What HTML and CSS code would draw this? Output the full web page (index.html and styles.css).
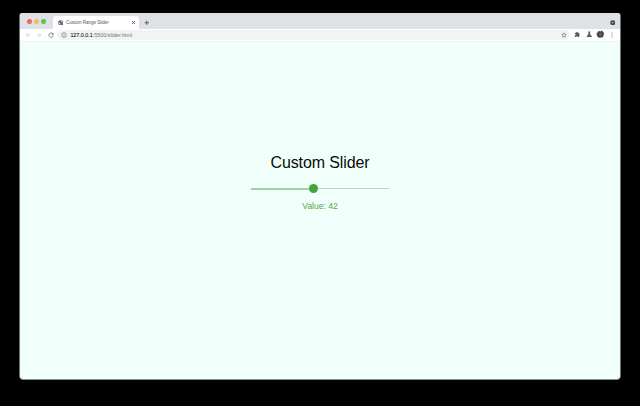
FILE: index.html
```html
<!DOCTYPE html>
<html lang="en">
<head>
<meta charset="utf-8">
<title>Custom Range Slider</title>
<link rel="stylesheet" href="styles.css">
</head>
<body>
<div class="window">
  <header class="tabstrip">
    <div class="lights"><i class="light red"></i><i class="light yellow"></i><i class="light green"></i></div>
    <div class="tab">
      <svg class="globe" viewBox="0 0 12 12"><circle cx="6" cy="6" r="5.6" fill="#505459"/><path d="M1.500 5 4 6.200 5.500 8v2.300C3 10 1.300 8 1.500 5ZM6 1.400 5.800 3.500 8 4.800l2.500.6C10.300 3 8.500 1.500 6 1.400ZM8 7.500h2.200L8.500 9.700Z" fill="#e8eaec"/></svg>
      <span class="tab-title">Custom Range Slider</span>
      <svg class="close" viewBox="0 0 10 10"><path d="m2 2 6 6M8 2 2 8" stroke="#45484c" stroke-width="1.6"/></svg>
    </div>
    <svg class="plus" viewBox="0 0 10 10"><path d="M5 1v8M1 5h8" stroke="#45484c" stroke-width="1.5"/></svg>
    <svg class="menu" viewBox="0 0 12 12"><circle cx="6" cy="6" r="5.500" fill="#484b50"/><path d="M3.500 4.800h5L6 7.800Z" fill="#e1e3e6"/></svg>
  </header>
  <nav class="toolbar">
    <svg class="nav-icon" viewBox="0 0 12 12"><path d="M10.500 6h-8M6 2.200 2.200 6 6 9.800" fill="none" stroke="#c2c4c7" stroke-width="1.300"/></svg>
    <svg class="nav-icon" viewBox="0 0 12 12"><path d="M1.500 6h8M6 2.200 9.800 6 6 9.800" fill="none" stroke="#c2c4c7" stroke-width="1.300"/></svg>
    <svg class="nav-icon" viewBox="0 0 12 12"><path d="M9.500 3.500A4.300 4.300 0 1 0 10.300 7" fill="none" stroke="#5f6368" stroke-width="1.500"/><path d="M10.800 1v4.300H6.500Z" fill="#5f6368"/></svg>
    <div class="address">
      <svg class="info" viewBox="0 0 12 12"><circle cx="6" cy="6" r="4.700" fill="none" stroke="#66696e" stroke-width="1.200"/><path d="M6 5.300V9M6 3v1.300" stroke="#66696e" stroke-width="1.300"/></svg>
      <span class="url"><span class="host">127.0.0.1</span>:5500/slider.html</span>
      <svg class="star" viewBox="0 0 12 12"><path d="m6 1.500 1.300 3.100 3.400.3-2.600 2.200.8 3.300L6 8.600l-2.900 1.800.8-3.300-2.600-2.200 3.400-.3Z" fill="none" stroke="#5f6368" stroke-width="1.100"/></svg>
    </div>
    <svg class="action" viewBox="0 0 12 12"><path d="M1.500 3H4a1.500 1.500 0 0 1 3 0h2.500v2.500a1.500 1.500 0 0 1 0 3v2.500H7a1.500 1.500 0 0 0-3 0H1.500V8.300a1.500 1.500 0 0 0 0-3Z" fill="#5b5f64"/></svg>
    <svg class="action" viewBox="0 0 12 12"><path d="M4 1h4v1L7.600 3v2.500L10.800 10v1H1.200v-1l3.200-4.500V3L4 2Z" fill="#5b5f64"/></svg>
    <svg class="avatar" viewBox="0 0 16 16"><path d="M5 1.500 8 3l3-2.200 2 2.700 2.500 3-1.500 3-.5 4-4 .5-2 .8L5 14l-2.500-1.500-.5-3L.5 7 3 4.500Z" fill="#464646"/><path d="m8 4 1 3 3 .5-3 1-1 4-1-3.500L3.500 8 7 7Z" fill="#77716d"/></svg>
    <svg class="more" viewBox="0 0 4 12"><circle cx="2" cy="2" r="1.100" fill="#5f6368"/><circle cx="2" cy="6" r="1.100" fill="#5f6368"/><circle cx="2" cy="10" r="1.100" fill="#5f6368"/></svg>
  </nav>
  <main class="page">
    <h1 class="title">Custom Slider</h1>
    <div class="slider"><span class="fill"></span><span class="thumb"></span><span class="rest"></span></div>
    <p class="value">Value: 42</p>
  </main>
</div>
</body>
</html>
```
FILE: styles.css
```css
* { box-sizing: border-box; }
body {
  margin: 0;
  height: 406px;
  padding: 13px 20px 0;
  overflow: hidden;
  background: #000;
  font-family: "Liberation Sans", Arial, sans-serif;
}
svg { display: block; flex: none; }
.window {
  display: flex;
  flex-direction: column;
  width: 600px;
  height: 366px;
  border-radius: 3px;
  overflow: hidden;
  background: #f1fffb;
  box-shadow: -1px 0 #6c706f, 1px 0 #6c706f, 0 1px #8b908e;
}
.tabstrip {
  display: flex;
  height: 15.5px;
  flex: none;
  background: #dee1e5;
}
.lights { display: flex; gap: 2.5px; padding: 6px 0 0 7px; width: 33px; }
.light { width: 4.6px; height: 4.6px; border-radius: 50%; }
.red { background: #ee6b60; }
.yellow { background: #f2be50; }
.green { background: #5fc454; }
.tab {
  display: flex;
  align-items: center;
  width: 86px;
  height: 12.5px;
  margin-top: 3px;
  padding: 0 3.5px 0 4.5px;
  border-radius: 3px 3px 0 0;
  background: #fff;
}
.globe { width: 5.5px; height: 5.5px; }
.tab-title {
  flex: 1;
  margin-left: 3px;
  padding-top: 1.5px;
  color: #505358;
  font-size: 4.5px;
  line-height: 6px;
  white-space: nowrap;
}
.close { width: 5px; height: 5px; }
.plus { width: 5.5px; height: 5.5px; margin: 6.5px 0 0 5px; }
.menu { width: 5.5px; height: 5.5px; margin: 6.5px 5px 0 auto; }
.toolbar {
  display: flex;
  align-items: center;
  height: 13px;
  flex: none;
  padding: 0 7px 0 4.5px;
  border-bottom: 1px solid #edf5f2;
  background: #fff;
}
.nav-icon { width: 6px; height: 6px; margin-right: 5.7px; }
.nav-icon:nth-of-type(3) { margin-right: 3.5px; }
.address {
  display: flex;
  align-items: center;
  flex: 1;
  height: 10px;
  padding: 0 3.500px 0 4px;
  border-radius: 5px;
  background: #f1f3f4;
}
.info { width: 6px; height: 6px; }
.url {
  flex: 1;
  margin-left: 3px;
  padding-top: 1px;
  color: #72767a;
  font-size: 5.4px;
  line-height: 7px;
  white-space: nowrap;
}
.host { color: #25282c; -webkit-text-stroke: 0.1px #25282c; }
.star { width: 6px; height: 6px; }
.action { width: 6.5px; height: 6.5px; margin-left: 5px; }
.address + .action { margin-left: 4px; }
.avatar { width: 8.5px; height: 8.5px; margin-left: 4px; }
.more { width: 2px; height: 6px; margin-left: 6.5px; }
.page {
  display: flex;
  flex-direction: column;
  align-items: center;
  padding-top: 111.5px;
}
.title {
  margin: 0;
  color: #080a09;
  font-size: 16px;
  line-height: 20px;
  font-weight: 400;
  letter-spacing: -0.12px;
}
.slider {
  display: flex;
  align-items: center;
  width: 138px;
  height: 9px;
  margin-top: 11px;
}
.fill { width: 58px; height: 2px; background: #a0d49d; }
.thumb { width: 9px; height: 9px; border-radius: 50%; background: #48a23f; }
.rest { flex: 1; height: 1px; background: #c5cfcb; }
.value {
  margin: 7.5px 0 0;
  color: #55a746;
  font-size: 8.5px;
  line-height: 10px;
}
```
